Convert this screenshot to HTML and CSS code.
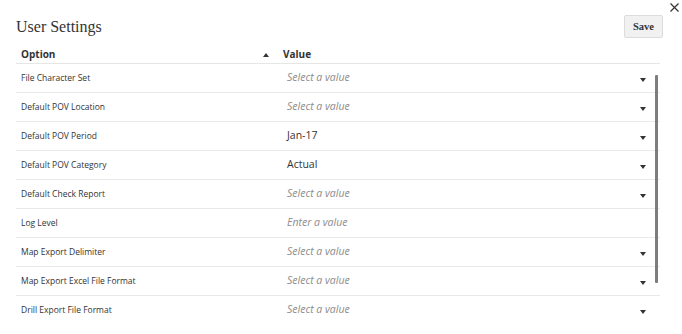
FILE: index.html
```html
<!DOCTYPE html>
<html lang="en">

<head>
  <meta charset="UTF-8">
  <title>User Settings</title>
  <link rel="stylesheet" href="styles.css">
</head>

<body>
  <main class="dialog">
    <button class="close" aria-label="Close">
      <svg width="9" height="9" viewBox="0 0 9 9">
        <path d="M0.5 0.5 L8.5 8.5 M8.5 0.5 L0.5 8.5" stroke="#333" stroke-width="1.2" fill="none" />
      </svg>
    </button>
    <header class="dialog-head">
      <h1>User Settings</h1>
      <button class="save">Save</button>
    </header>

    <div class="settings">
      <div class="thead">
        <div class="col-option">
          <span>Option</span>
          <span class="sort-up"></span>
        </div>
        <div class="col-value">Value</div>
      </div>

      <div class="tbody">
        <div class="row">
          <div class="col-option">File Character Set</div>
          <div class="col-value placeholder">Select a value</div>
          <span class="caret"></span>
        </div>
        <div class="row">
          <div class="col-option">Default POV Location</div>
          <div class="col-value placeholder">Select a value</div>
          <span class="caret"></span>
        </div>
        <div class="row">
          <div class="col-option">Default POV Period</div>
          <div class="col-value">Jan-17</div>
          <span class="caret"></span>
        </div>
        <div class="row">
          <div class="col-option">Default POV Category</div>
          <div class="col-value">Actual</div>
          <span class="caret"></span>
        </div>
        <div class="row">
          <div class="col-option">Default Check Report</div>
          <div class="col-value placeholder">Select a value</div>
          <span class="caret"></span>
        </div>
        <div class="row">
          <div class="col-option">Log Level</div>
          <div class="col-value placeholder">Enter a value</div>
        </div>
        <div class="row">
          <div class="col-option">Map Export Delimiter</div>
          <div class="col-value placeholder">Select a value</div>
          <span class="caret"></span>
        </div>
        <div class="row">
          <div class="col-option">Map Export Excel File Format</div>
          <div class="col-value placeholder">Select a value</div>
          <span class="caret"></span>
        </div>
        <div class="row">
          <div class="col-option">Drill Export File Format</div>
          <div class="col-value placeholder">Select a value</div>
          <span class="caret"></span>
        </div>
        <div class="scroll-thumb"></div>
      </div>
    </div>
  </main>
</body>

</html>
```

FILE: styles.css
```css
/* Base */
* {
  box-sizing: border-box;
  margin: 0;
  padding: 0;
}

html,
body {
  background: #fff;
  color: #333;
  font-family: 'Open Sans', 'Liberation Sans', sans-serif;
}

.dialog {
  position: relative;
  width: 682px;
  height: 334px;
  padding: 0 22px 0 16px;
  overflow: hidden;
}

/* Close button sits over the corner */
.close {
  position: absolute;
  top: 3px;
  right: 3px;
  width: 9px;
  height: 9px;
  border: none;
  background: none;
  display: flex;
}

/* Title bar */
.dialog-head {
  display: flex;
  justify-content: space-between;
  align-items: center;
  padding-top: 15px;
}

.dialog-head h1 {
  font-family: 'Liberation Serif', 'Times New Roman', serif;
  font-weight: normal;
  font-size: 16px;
  line-height: 23px;
  color: #333;
}

.save {
  width: 39px;
  height: 23px;
  margin-right: -3px;
  background: #f1f1f1;
  border: 1px solid #dcdcdc;
  border-radius: 2px;
  font-family: 'Liberation Serif', 'Times New Roman', serif;
  font-weight: bold;
  font-size: 10.5px;
  color: #333;
}

/* Settings table */
.thead {
  display: flex;
  margin-top: 8px;
  line-height: 17px;
  font-size: 10px;
  font-weight: bold;
  color: #333;
  border-bottom: 1px solid #e6e6e6;
}

.thead .col-option {
  width: 267px;
  padding-left: 5px;
  padding-right: 14px;
  display: flex;
  justify-content: space-between;
  align-items: center;
}

.sort-up {
  width: 0;
  height: 0;
  border-left: 3px solid transparent;
  border-right: 3px solid transparent;
  border-bottom: 4px solid #333;
}

.tbody {
  position: relative;
  height: 259px;
  overflow: hidden;
}

.row {
  display: flex;
  align-items: center;
  height: 29px;
  padding-bottom: 2px;
  border-bottom: 1px solid #e9e9e9;
}

.row .col-option {
  width: 267px;
  padding-left: 5px;
  font-size: 8.5px;
  color: #333;
}

.row .col-value {
  flex: 1;
  padding-left: 4px;
  font-size: 10.5px;
  color: #333;
}

.row .placeholder {
  font-style: italic;
  color: #8c8c8c;
}

.caret {
  width: 0;
  height: 0;
  margin: 5px 14px 0 0;
  border-left: 3px solid transparent;
  border-right: 3px solid transparent;
  border-top: 4px solid #333;
}

.scroll-thumb {
  position: absolute;
  top: 11px;
  right: 2px;
  width: 3px;
  height: 208px;
  border-radius: 1px;
  background: #7d7d7d;
}
```
